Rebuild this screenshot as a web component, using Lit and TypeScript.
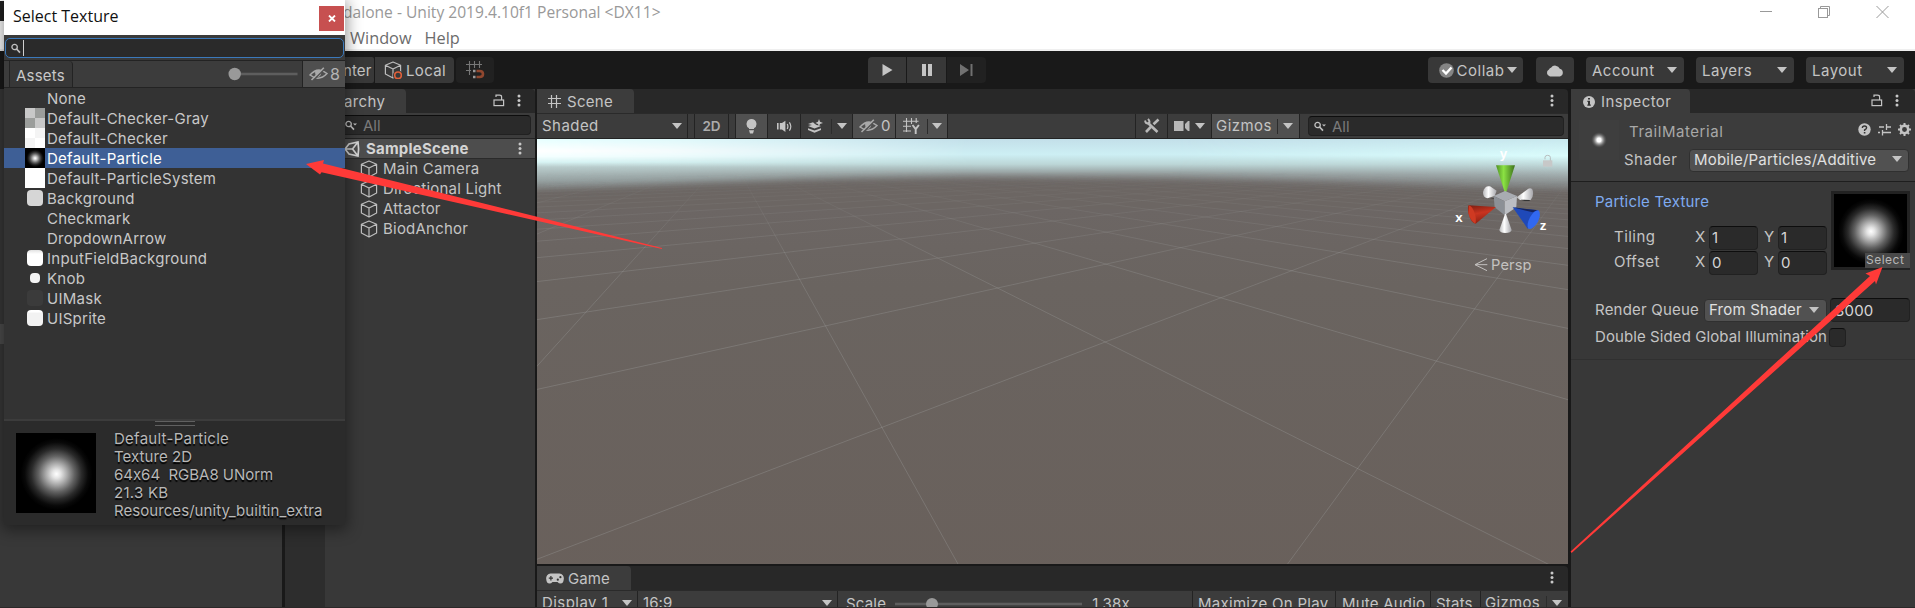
import { LitElement, html, svg, css } from "lit";
import { customElement } from "lit/decorators.js";

const caret = html`<svg class="caret" width="10" height="6" viewBox="0 0 10 6"><path d="M0 0H10L5 6Z" fill="currentColor"/></svg>`;
const dots = html`<svg class="dots" width="4" height="13" viewBox="0 0 4 13" fill="#c8c8c8"><circle cx="2" cy="2" r="1.5"/><circle cx="2" cy="6.5" r="1.5"/><circle cx="2" cy="11" r="1.5"/></svg>`;
const lock = html`<svg class="lock" width="12" height="13" viewBox="0 0 12 13" fill="none" stroke="#c4c4c4" stroke-width="1.2"><rect x="1" y="6" width="9.6" height="5.6"/><path d="M3 3V1.2H6.5Q8.6 1.2 8.6 3V6"/></svg>`;
const cube = (ring = false) => html`<svg class="cube" width="18" height="18" viewBox="0 0 18 18" fill="none" stroke="#bdbdbd" stroke-width="1.2" stroke-linejoin="round"><path d="M9 1L16.6 4.2V13L9 17L1.4 13V4.2ZM1.4 4.2L9 8L16.6 4.2M9 8V17"/>${ring ? svg`<circle cx="14" cy="14.5" r="5" fill="#383838" stroke="none"/><circle cx="14" cy="14.3" r="3.3" stroke="#e0603a" stroke-width="1.6"/>` : ""}</svg>`;
const search = (drop = true) => html`<svg class="mag" width="13" height="11" viewBox="0 0 13 11" fill="none" stroke="#c0c0c0"><circle cx="3.6" cy="4" r="2.7" stroke-width="1.3"/><path d="M5.6 6L9 9.6" stroke-width="1.6"/>${drop ? svg`<path d="M8 3.4h4L10 5.6Z" fill="#c0c0c0" stroke="none"/>` : ""}</svg>`;
const eye = html`<svg width="19" height="14" viewBox="0 0 19 14" fill="none" stroke="#a9a9a9"><path d="M1 8Q9 -1 18 6.5Q10 15 1 8Z" stroke-width="1.5"/><path d="M6 4.5Q9 2.5 12 4Q13 8 9.5 10Q6 9 6 4.5Z" fill="#a9a9a9" stroke="none"/><path d="M4 13.5L16 1.5" stroke="#505050" stroke-width="1.6"/><path d="M2.5 13L14.8 .7" stroke-width="1.6"/></svg>`;
const particle = (id: string, size: number) => html`<svg class="particle" width=${size} height=${size} viewBox="0 0 80 80"><defs><radialGradient id=${id}><stop offset="0" stop-color="#fff"/><stop offset=".12" stop-color="#e4e4e4"/><stop offset=".3" stop-color="#a8a8a8"/><stop offset=".5" stop-color="#626262"/><stop offset=".7" stop-color="#2a2a2a"/><stop offset=".88" stop-color="#090909"/><stop offset="1" stop-color="#000"/></radialGradient></defs><rect width="80" height="80" fill="#000"/><circle cx="40.5" cy="41" r="36" fill="url(#${id})"/></svg>`;

const shared = css`
  * { box-sizing: border-box; }
  svg { display: block; flex: none; }
  .caret { color: #c4c4c4; }
  .row { display: flex; align-items: center; }
  .grow { flex: 1; }
  .field {
    display: flex; align-items: center; background: #2a2a2a;
    border: 1px solid #212121; border-top-color: #0d0d0d; border-radius: 4px;
  }
  .tabs { display: flex; height: 24px; background: #282828; border-top-right-radius: 4px; flex: none; }
  .tab { display: flex; align-items: center; background: #3c3c3c; border-top-right-radius: 4px; padding-top: 1px; height: 24px; }
  .tools { display: flex; align-items: center; }
`;

/** Grid of the ground plane, projected to the viewport. */
function groundLines() {
  const project = (u: number, v: number) => {
    const w = 1 + 0.3177 * u + 0.4018 * v;
    return [(860 + 503.8 * u + 117.1 * v) / w / 1.5135, (618 + 21.6 * u + 21.2 * v) / w / 3 - 3];
  };
  const lines: number[][] = [];
  for (let k = -26; k <= 30; k++) {
    const v0 = (0.25 - 1 - 0.3177 * k) / 0.4018;
    lines.push([...project(k, v0), ...project(k, v0 + 70)]);
    const u0 = (0.25 - 1 - 0.4018 * k) / 0.3177;
    lines.push([...project(u0, k), ...project(u0 + 70, k)]);
  }
  return lines.map(([a, b, c, d]) => svg`<line x1=${a} y1=${b} x2=${c} y2=${d}/>`);
}

@customElement("scene-viewport")
class SceneViewport extends LitElement {
  static styles = css`
    :host { display: block; height: 425px; overflow: hidden; flex: none; }
    svg { display: block; }
    .axis { font: 700 40px "Liberation Sans", sans-serif; fill: #fff; }
    .persp { font: 44px Inter, sans-serif; fill: #c4c2c0; }
  `;
  render() {
    return html`<svg width="1031" height="425" viewBox="0 0 1031 425">
      <defs>
        <linearGradient id="sky" x2="0" y2="1"><stop offset="0" stop-color="#c3dfe9"/><stop offset=".22" stop-color="#cdeff4"/><stop offset=".36" stop-color="#bcd6d7"/><stop offset=".5" stop-color="#949c9c"/><stop offset=".62" stop-color="#7a7979"/><stop offset="1" stop-color="#6c6664"/></linearGradient>
        <linearGradient id="skyL" x2="0" y2="1"><stop offset="0" stop-color="#e6ffff"/><stop offset=".17" stop-color="#fff"/><stop offset=".25" stop-color="#f4ffff"/><stop offset=".33" stop-color="#d8f4f4"/><stop offset=".4" stop-color="#b9cccc"/><stop offset=".6" stop-color="#95a0a0"/><stop offset=".78" stop-color="#6d6866"/></linearGradient>
        <linearGradient id="skyR" x2="0" y2="1"><stop offset="0" stop-color="#c8e8ee"/><stop offset=".24" stop-color="#dafcfc"/><stop offset=".36" stop-color="#c0dadb"/><stop offset=".5" stop-color="#a3b0b1"/><stop offset=".65" stop-color="#858989"/><stop offset=".78" stop-color="#6d6866"/></linearGradient>
        <linearGradient id="fromL"><stop offset="0" stop-color="#fff"/><stop offset=".3" stop-color="#ccc"/><stop offset="1" stop-color="#000"/></linearGradient>
        <linearGradient id="fromR"><stop offset="0" stop-color="#000"/><stop offset="1" stop-color="#fff"/></linearGradient>
        <mask id="ml"><rect width="440" height="70" fill="url(#fromL)"/></mask>
        <mask id="mr"><rect x="640" width="391" height="70" fill="url(#fromR)"/></mask>
        <linearGradient id="fade" x2="0" y2="1"><stop offset=".08" stop-color="#000"/><stop offset=".15" stop-color="#555"/><stop offset=".3" stop-color="#ddd"/><stop offset=".5" stop-color="#fff"/></linearGradient>
        <linearGradient id="soil" x2="0" y2="1"><stop offset="0" stop-color="#6c6664"/><stop offset=".2" stop-color="#6a6460"/><stop offset="1" stop-color="#69605b"/></linearGradient>
        <mask id="far"><rect width="1031" height="425" fill="url(#fade)"/></mask>
        <filter id="soft" x="-10%" y="-10%" width="120%" height="120%"><feGaussianBlur stdDeviation="3.5"/></filter>
        <linearGradient id="cg"><stop offset="0" stop-color="#4f8f24"/><stop offset=".4" stop-color="#8be243"/><stop offset="1" stop-color="#3d701c"/></linearGradient>
        <linearGradient id="cr" x2=".3" y2="1"><stop offset="0" stop-color="#7a1d10"/><stop offset=".5" stop-color="#c93420"/><stop offset="1" stop-color="#8c2213"/></linearGradient>
        <linearGradient id="cw"><stop offset="0" stop-color="#b8b8ba"/><stop offset=".4" stop-color="#fff"/><stop offset="1" stop-color="#a5a5aa"/></linearGradient>
      </defs>
      <rect width="1031" height="70" fill="url(#sky)"/>
      <rect width="440" height="70" fill="url(#skyL)" mask="url(#ml)"/>
      <rect x="640" width="391" height="70" fill="url(#skyR)" mask="url(#mr)"/>
      <path d="M-40 56Q200 40 430 39Q750 39 1075 56V460H-40Z" fill="#6c6664" filter="url(#soft)"/>
      <path d="M-40 70H1075V460H-40Z" fill="url(#soil)"/>
      <g stroke="#b4b9b6" stroke-opacity=".24" stroke-width="1" mask="url(#far)">${groundLines()}</g>
      <g transform="translate(863 -19) scale(.33333)">
        <path d="M435 118v-6q0-6 8-6t8 6v12" fill="none" stroke="#b7bcbc" stroke-width="3"/><rect x="429" y="121" width="28" height="19" fill="#c7c8c8"/>
        <path d="M288 136H345L318 219H315Z" fill="url(#cg)"/>
        <path d="M249 216Q254 196 270 199L290 212L284 228L262 235Q248 232 249 216Z" fill="url(#cw)"/>
        <path d="M350 232L385 206Q397 202 399 215Q401 230 392 240L360 240Z" fill="url(#cw)"/>
        <path d="M362 239L390 240L388 243L374 243Z M270 234l14 1v3z" fill="#333"/>
        <path d="M315 213L351 228L314 244L281 228Z" fill="#a9acb2"/><path d="M281 228L314 244V286L284 262Z" fill="#8c9096"/><path d="M351 228L314 244V286L349 262Z" fill="#bcbec3"/>
        <path d="M315 282H318L335 330Q333 339 316 339Q300 339 298 330Z" fill="url(#cw)"/>
        <path d="M288 261L227 311Q213 310 205 280Q202 260 206 256Z" fill="url(#cr)"/><path d="M206 256Q217 257 226 285Q229 303 226 311Q213 305 206 280Z" fill="#cf3a22"/>
        <path d="M338 262L415 271L383 326Z" fill="#1f49b8"/><path d="M338 262L415 271L398 277Z" fill="#16245c"/>
        <path d="M415 271Q425 280 414 305Q400 328 386 327Q377 318 390 292Q403 270 415 271Z" fill="#3168f0"/>
        <text class="axis" x="299" y="114">y</text><text class="axis" x="166" y="305">x</text><text class="axis" x="419" y="330">z</text>
        <path d="M261 416L225 434L261 452M225 434H262" stroke="#c4c2c0" stroke-width="3" fill="none"/>
        <text class="persp" x="273" y="450" textLength="122">Persp</text>
      </g>
    </svg>`;
  }
}

@customElement("texture-picker")
class TexturePicker extends LitElement {
  static styles = [shared, css`
    :host { display: flex; flex-direction: column; width: 341px; height: 525px; background: #333; box-shadow: 0 3px 14px 2px rgba(0,0,0,.42); overflow: hidden; color: #c8c8c8; }
    .title { height: 35px; background: #fff; color: #111; font: 16px "Open Sans", "Noto Sans", sans-serif; padding: 0 1px 4px 9px; justify-content: space-between; letter-spacing: 0; flex: none; }
    .close { width: 25px; height: 25px; margin-top: 6px; background: #c75050; display: grid; place-items: center; }
    .find { height: 25px; background: #3a3a3a; padding: 3px 1px 2px; flex: none; }
    .input { height: 20px; border: 1.5px solid #3b79bb; border-radius: 5px; background: #2a2a2a; padding-left: 5px; display: flex; align-items: center; }
    .cursor { width: 1px; height: 16px; background: #d0d0d0; margin-left: -1px; }
    .bar { height: 28px; background: #3c3c3c; border-top: 1px solid #232323; border-bottom: 1px solid #232323; display: flex; align-items: stretch; flex: none; }
    .stub { width: 6px; border-right: 1px solid #232323; }
    .assets { width: 63px; background: #373737; border-right: 1px solid #232323; border-top-right-radius: 4px; padding: 2px 0 0 6px; display: flex; align-items: center; letter-spacing: .2px; }
    .count { width: 43px; background: #4f4f4f; border-left: 1px solid #232323; display: flex; align-items: center; gap: 2px; padding-left: 6px; font-size: 16px; color: #b4b4b4; }
    .slider { align-self: center; margin-right: 4px; }
    .list { flex: 1; letter-spacing: .26px; }
    .item { height: 20px; display: flex; align-items: center; padding-left: 21px; }
    .item.on { background: #3e5f96; color: #fff; }
    .thumb { width: 20px; height: 20px; margin-right: 2px; display: grid; place-items: center; flex: none; }
    .chip { width: 16px; height: 16px; border-radius: 4px; }
    .gray { background: conic-gradient(#9b9d9b 25%, #c8c8c8 0 50%, #9b9d9b 0 75%, #c8c8c8 0); }
    .checker { background: conic-gradient(#f4f4f4 25%, #fff 0 50%, #f4f4f4 0 75%, #fff 0); }
    .white { background: #fff; }
    .bg { background: #d6d6d6; } .input-bg { background: linear-gradient(#e2e2e2, #fff 25%); } .mask { background: #3b3b3b; } .sprite { background: linear-gradient(#fff 12%, #f2f2f2 20%); }
    .knob { width: 10px; height: 10px; border-radius: 4px; background: #f3f3f3; }
    .foot { height: 106px; background: #2b2b2b; border-top: 2px solid #3c3c3c; flex: none; }
    .grip { width: 40px; height: 5px; margin: 0 auto; border: solid #606060; border-width: 1px 0; }
    .info { display: flex; padding: 7px 0 0 12px; gap: 18px; }
    .meta { margin-top: -3px; line-height: 18px; text-shadow: 0 1.5px 1px #000; color: #b8b8b8; white-space: pre; letter-spacing: .26px; font-feature-settings: "calt" 0; }
    .tight { letter-spacing: -.02px; } .snug { letter-spacing: .06px; }
  `];
  items: [string, string][] = [
    ["None", ""], ["Default-Checker-Gray", "gray"], ["Default-Checker", "checker"], ["Default-Particle", "particle"],
    ["Default-ParticleSystem", "white"], ["Background", "chip bg"], ["Checkmark", ""], ["DropdownArrow", ""],
    ["InputFieldBackground", "chip input-bg"], ["Knob", "knob"], ["UIMask", "chip mask"], ["UISprite", "chip sprite"],
  ];
  render() {
    return html`
      <div class="row title"><span>Select Texture</span><div class="close"><svg width="8" height="7" viewBox="0 0 8 7"><path d="M1 .5L7 6.5M7 .5L1 6.5" stroke="#fff" stroke-width="1.8"/></svg></div></div>
      <div class="find"><div class="input">${search(false)}<span class="cursor"></span></div></div>
      <div class="bar"><span class="stub"></span><span class="assets">Assets</span><span class="grow"></span>
        <svg class="slider" width="70" height="14" viewBox="0 0 70 14"><rect x="6" y="5.7" width="63.5" height="2.6" fill="#5e5e5e"/><circle cx="6.7" cy="7" r="6.2" fill="#999"/></svg>
        <span class="count">${eye}<span>8</span></span></div>
      <div class="list">${this.items.map(([name, kind]) => html`<div class="item ${kind === "particle" ? "on" : ""}">
        ${kind === "particle" ? html`<span class="thumb">${particle("tiny", 20)}</span>`
          : ["gray", "checker", "white"].includes(kind) ? html`<span class="thumb ${kind}"></span>`
          : html`<span class="thumb"><i class=${kind}></i></span>`}<span>${name}</span></div>`)}</div>
      <div class="foot"><div class="grip"></div><div class="info">${particle("big", 80)}
        <div class="meta"><div>Default-Particle</div><div class="snug">Texture 2D</div><div class="tight">64x64  RGBA8 UNorm</div><div>21.3 KB</div><div class="snug">Resources/unity_builtin_extra</div></div></div></div>`;
  }
}

@customElement("inspector-panel")
class InspectorPanel extends LitElement {
  static styles = [shared, css`
    :host { display: flex; flex-direction: column; width: 344px; background: #383838; color: #c4c4c4; flex: none; letter-spacing: .2px; }
    .tab { width: 119px; padding-left: 12px; gap: 6px; letter-spacing: .4px; }
    .tabs .tools { margin-left: auto; gap: 12px; padding: 0 16px 2px 0; }
    .head { height: 69px; background: #3c3c3c; border-bottom: 1px solid #1e1e1e; display: flex; padding-left: 8px; flex: none; }
    .orb { margin-top: 7px; }
    .info { flex: 1; padding: 8px 4px 0 10px; }
    .name { height: 20px; color: #a8a8a8; letter-spacing: .55px; justify-content: space-between; }
    .name .tools { gap: 7px; margin-top: -4px; }
    .shader { margin-top: 8px; margin-left: -5px; height: 22px; justify-content: space-between; padding-right: 2px; }
    .shader > span { letter-spacing: .5px; padding-bottom: 1px; }
    .drop { background: #515151; border: 1px solid #303030; border-radius: 4px; height: 23px; display: flex; align-items: center; justify-content: space-between; padding: 0 6px 1px 4px; color: #e0e0e0; }
    .shader .drop { width: 220px; padding-bottom: 2px; }
    .body { padding: 9px 5px 0 24px; height: 178px; border-bottom: 1px solid #303030; }
    .tex { display: flex; justify-content: space-between; height: 80px; }
    .link { color: #7fabf0; height: 22px; display: flex; align-items: center; padding-bottom: 1px; }
    .uv { height: 25px; padding-left: 19px; }
    .uv.first { margin-top: 12px; }
    .lbl, .ax { padding-bottom: 2px; }
    .uv .lbl { width: 81px; letter-spacing: .45px; }
    .ax { width: 14px; } .ax.y { margin-left: 6px; }
    .uv .field { width: 49px; height: 24px; padding-left: 2px; color: #d6d6d6; }
    .slot { width: 79px; height: 79px; border: 3px solid #222; position: relative; flex: none; }
    .select { position: absolute; right: -3px; bottom: -1px; width: 45px; height: 15px; background: #494949; font-size: 12px; letter-spacing: .5px; line-height: 14px; padding-left: 1px; color: #b8b8b8; }
    .queue { margin-top: 27px; height: 24px; }
    .queue .lbl { width: 109px; }
    .queue .drop { width: 123px; padding-right: 7px; }
    .queue .field { width: 80px; height: 24px; margin-left: 3px; padding-left: 4px; color: #d6d6d6; }
    .gi { margin-top: 4px; height: 22px; letter-spacing: .09px; }
    .gi .lbl { width: 234px; white-space: nowrap; }
    .gi .field { width: 17px; height: 19px; }
  `];
  render() {
    return html`
      <div class="tabs"><div class="tab"><svg width="12" height="12" viewBox="0 0 12 12"><circle cx="6" cy="6" r="6" fill="#c4c4c4"/><path d="M5 2h2v1.6H5ZM4.4 4.8H7V8.6h.8V9.8H4.3V8.6H5V6H4.4Z" fill="#333"/></svg><span>Inspector</span></div><div class="tools">${lock}${dots}</div></div>
      <div class="head">
        <svg class="orb" width="40" height="40" viewBox="0 0 40 40"><defs><radialGradient id="o"><stop offset=".25" stop-color="#fff"/><stop offset=".6" stop-color="#aaa" stop-opacity=".6"/><stop offset="1" stop-color="#555" stop-opacity="0"/></radialGradient></defs><rect width="40" height="40" fill="#3e3e3e"/><circle cx="20" cy="20" r="8" fill="url(#o)"/></svg>
        <div class="info">
          <div class="row name"><span>TrailMaterial</span><div class="tools">
            <svg width="13" height="13" viewBox="0 0 13 13"><circle cx="6.5" cy="6.5" r="6.2" fill="#c4c4c4"/><path d="M4.4 5Q4.4 3 6.5 3T8.6 4.8Q8.6 6 6.6 6.9V8" stroke="#333" stroke-width="1.4" fill="none"/><rect x="5.8" y="9" width="1.6" height="1.5" fill="#333"/></svg>
            <svg width="13" height="13" viewBox="0 0 13 13" stroke="#c4c4c4" stroke-width="1.3" fill="none"><path d="M1 4h5M8.5 4H13M8.5 1v6M0 9.5h2M4.5 9.5H13M4.5 7v5.5"/></svg>
            <svg width="13" height="13" viewBox="0 0 13 13"><circle cx="6.5" cy="6.5" r="3.7" fill="none" stroke="#c4c4c4" stroke-width="2.5"/><path d="M6.5 0V3M6.5 10V13M0 6.5H2.5M10.5 6.5H13M2 2L3.6 3.6M9.4 9.4L11 11M11 2L9.4 3.6M3.6 9.4L2 11" stroke="#c4c4c4" stroke-width="2"/></svg></div></div>
          <div class="row shader"><span>Shader</span><div class="drop"><span>Mobile/Particles/Additive</span>${caret}</div></div>
        </div>
      </div>
      <div class="body">
        <div class="tex"><div>
          <div class="link">Particle Texture</div>
          <div class="row uv first"><span class="lbl">Tiling</span><span class="ax">X</span><span class="field">1</span><span class="ax y">Y</span><span class="field">1</span></div>
          <div class="row uv"><span class="lbl">Offset</span><span class="ax">X</span><span class="field">0</span><span class="ax y">Y</span><span class="field">0</span></div>
        </div><div class="slot">${particle("slot", 73)}<span class="select">Select</span></div></div>
        <div class="row queue"><span class="lbl">Render Queue</span><div class="drop"><span>From Shader</span>${caret}</div><span class="field">3000</span></div>
        <div class="row gi"><span class="lbl">Double Sided Global Illumination</span><span class="field"></span></div>
      </div>`;
  }
}

@customElement("hierarchy-panel")
class HierarchyPanel extends LitElement {
  static styles = [shared, css`
    :host { display: flex; flex-direction: column; width: 250px; background: #383838; border-left: 40px solid #2d2d2d; color: #c4c4c4; flex: none; }
    .tab { width: 81px; padding-left: 19px; letter-spacing: .35px; }
    .tabs .tools { margin-left: auto; gap: 12px; padding: 0 14px 2px 0; }
    .find { height: 26px; background: #3c3c3c; border-bottom: 1px solid #232323; padding: 2px 4px 0 0; flex: none; }
    .find .field { height: 20px; padding-left: 19px; color: #7a7a7a; gap: 5px; letter-spacing: 0; }
    .scene { height: 20px; background: #4d4d4d; border-bottom: 1px solid #2a2a2a; font-weight: 700; padding: 0 13px 0 19px; gap: 6px; letter-spacing: .2px; color: #d4d4d4; }
    .node { height: 20px; padding: 0 0 1px 35px; gap: 5px; letter-spacing: .22px; }
  `];
  render() {
    return html`
      <div class="tabs"><div class="tab">archy</div><div class="tools">${lock}${dots}</div></div>
      <div class="find"><div class="field">${search()}<span>All</span></div></div>
      <div class="row scene"><svg width="16" height="16" viewBox="0 0 16 16" fill="none" stroke="#d4d4d4" stroke-width="1.7"><path d="M1 8L5 3L14 1L14.6 8L14 15L5 13ZM1 8H8.5L14 1M8.5 8L14 15"/></svg><span>SampleScene</span><span class="grow"></span>${dots}</div>
      ${["Main Camera", "Directional Light", "Attactor", "BiodAnchor"].map((n) => html`<div class="row node">${cube()}<span>${n}</span></div>`)}`;
  }
}

@customElement("scene-panel")
class ScenePanel extends LitElement {
  static styles = [shared, css`
    :host { display: flex; flex-direction: column; width: 1031px; color: #c4c4c4; flex: none; overflow: hidden; letter-spacing: .45px; }
    .tab { width: 97px; padding-left: 11px; gap: 6px; letter-spacing: .3px; }
    .tab.game { width: 94px; padding-left: 9px; gap: 4px; letter-spacing: .1px; }
    .tabs { padding-right: 14px; }
    .tabs .dots { margin: 5px 0 0 auto; }
    .strip { height: 26px; background: #3c3c3c; border-bottom: 1px solid #232323; border-top: 1px solid #2a2a2a; display: flex; flex: none; }
    .cell { display: flex; align-items: center; border-right: 1px solid #232323; flex: none; }
    .cell > span { padding-bottom: 1px; }
    .center { justify-content: center; }
    .lit { background: #505050; }
    .shaded { width: 151px; padding: 0 5px; justify-content: space-between; }
    .gap { width: 7px; }
    .two { width: 34px; font-size: 13.5px; font-weight: 600; letter-spacing: -.2px; color: #acacac; padding-bottom: 1px; }
    .b32 { width: 32px; } .b33 { width: 33px; }
    .split { width: 52px; padding: 0 5px 0 7px; justify-content: space-between; }
    .split .bar { width: 1px; height: 15px; background: #2c2c2c; margin-left: 2px; }
    .eyes { width: 43px; padding-left: 6px; gap: 3px; font-size: 15px; letter-spacing: 0; }
    .fill { width: 188px; }
    .cam { width: 43px; padding: 0 6px 0 5px; justify-content: space-between; margin-left: 1px; }
    .giz { width: 88px; padding: 0 6px 0 4px; justify-content: space-between; }
    .giz .bar { width: 1px; height: 15px; background: #2c2c2c; margin-left: 1px; }
    .strip .field { width: 256px; height: 20px; margin: 2px 0 0 8px; padding-left: 5px; gap: 5px; color: #7a7a7a; letter-spacing: 0; }
    .rule { height: 2px; background: #191919; flex: none; }
    .display { width: 101px; padding: 0 5px; justify-content: space-between; }
    .ratio { width: 200px; padding: 0 5px; justify-content: space-between; letter-spacing: .1px; }
    .scale { width: 355px; padding: 2px 0 0 8px; gap: 9px; letter-spacing: .2px; }
    .max { width: 143px; padding-left: 5px; letter-spacing: .28px; } .mute { width: 95px; padding-left: 6px; letter-spacing: .2px; } .stats { width: 50px; padding-left: 5px; letter-spacing: .2px; }
    .end { width: 88px; padding: 0 6px 0 4px; justify-content: space-between; letter-spacing: .3px; }
    .end .bar { width: 1px; height: 15px; background: #2c2c2c; margin-left: 2px; }
  `];
  render() {
    return html`
      <div class="tabs"><div class="tab"><svg width="13" height="13" viewBox="0 0 13 13" stroke="#c4c4c4" stroke-width="1.2"><path d="M3.5 0V13M8.5 0V13M0 3.5H13M0 8.5H13"/></svg><span>Scene</span></div>${dots}</div>
      <div class="strip">
        <div class="cell shaded"><span>Shaded</span>${caret}</div><div class="cell gap"></div>
        <div class="cell two center">2D</div><div class="cell gap"></div>
        <div class="cell lit b32 center"><svg width="11" height="15" viewBox="0 0 11 15" fill="#c4c4c4"><path d="M5.5 0A5 5 0 0 1 8 9.3V10H3V9.3A5 5 0 0 1 5.5 0ZM3 11.3H8L7 14.5H4Z"/></svg></div>
        <div class="cell b33 center"><svg width="15" height="13" viewBox="0 0 15 13"><path d="M0 3h1.6v6.5H0ZM2.8 3H5L8.4 .8V12L5 9.6H2.8Z" fill="#c4c4c4"/><path d="M10.2 4Q11.6 6.4 10.2 9M12.4 2.3Q15.2 6.4 12.4 10.6" stroke="#c4c4c4" stroke-width="1.2" fill="none"/></svg></div>
        <div class="cell split"><svg width="15" height="14" viewBox="0 0 15 14" fill="#c4c4c4"><path d="M0 5L5 3.2L7 5L8.5 6L13 7L6.5 9.6L0 7L4 6ZM0 9.2L6.5 11.6L13 9.2V11L6.5 13.8L0 11ZM11 0L12 2.8L15 4L12 5L11 7.5L10 5L7.4 4L10 2.8Z"/></svg><i class="bar"></i>${caret}</div>
        <div class="cell lit eyes">${eye}<span>0</span></div>
        <div class="cell lit split"><svg width="17" height="16" viewBox="0 0 17 16" fill="none" stroke="#c4c4c4"><path d="M3.5 0V14M8.5 0V6M13.2 0V5M0 3.2H15.5M0 8.2H8M0 13H8" stroke-width="1.1"/><path d="M9.5 7L12.7 11.2L15.9 7M12.7 11V16" stroke-width="1.9"/></svg><i class="bar"></i>${caret}</div>
        <div class="cell fill"></div>
        <div class="cell b32 center"><svg width="16" height="16" viewBox="0 0 16 16" stroke="#b8b8b8" fill="none"><path d="M3.5 4.5L13.5 14" stroke-width="2.6"/><path d="M1 2.5Q1.5 6 5 5.5Q6.5 3.5 4 .8" stroke-width="1.8"/><path d="M14.5 1.5L9.5 6.2M6.8 9L2 14" stroke-width="2.6"/></svg></div>
        <div class="cell cam"><svg width="16" height="12" viewBox="0 0 16 12" fill="#b8b8b8"><path d="M0 1h9.5v10H0ZM11 4L14 1H15.5V11H14L11 8Z"/></svg>${caret}</div>
        <div class="cell lit giz"><span>Gizmos</span><i class="bar"></i>${caret}</div>
        <div class="field">${search()}<span>All</span></div>
      </div>
      <scene-viewport></scene-viewport>
      <div class="rule"></div>
      <div class="tabs"><div class="tab game"><svg width="18" height="11" viewBox="0 0 18 11"><path d="M4.5 .5H13.5A4.8 4.8 0 0 1 17.8 6Q17.5 10.5 14.5 10.5Q12.8 10.5 11.5 9H6.5Q5.2 10.5 3.5 10.5Q.5 10.5 .2 6A4.8 4.8 0 0 1 4.5 .5Z" fill="#c4c4c4"/><path d="M2.8 5.2H7M4.9 3V7.4" stroke="#333" stroke-width="1.2"/><circle cx="11.8" cy="6.7" r="1.1" fill="#333"/><circle cx="14.4" cy="4.2" r="1.1" fill="#333"/></svg><span>Game</span></div>${dots}</div>
      <div class="strip">
        <div class="cell display"><span>Display 1</span>${caret}</div>
        <div class="cell ratio"><span>16:9</span>${caret}</div>
        <div class="cell scale"><span>Scale</span><svg width="188" height="12" viewBox="0 0 188 12"><rect y="4.7" width="187" height="2.6" fill="#5e5e5e"/><circle cx="37" cy="6" r="6" fill="#999"/></svg><span>1.38x</span></div>
        <div class="cell max">Maximize On Play</div><div class="cell mute">Mute Audio</div><div class="cell stats">Stats</div>
        <div class="cell end"><span>Gizmos</span><i class="bar"></i>${caret}</div>
      </div>`;
  }
}

@customElement("app-root")
class AppRoot extends LitElement {
  static styles = [shared, css`
    :host { display: flex; flex-direction: column; position: relative; width: 1915px; height: 608px; overflow: hidden; background: #191919; font: 15px Inter, sans-serif; letter-spacing: .5px; white-space: nowrap; color: #c4c4c4; }
    .chrome { height: 51px; background: #fff; border-bottom: 2px solid #efefef; font: 16.3px "Open Sans", "Noto Sans", sans-serif; letter-spacing: 0; flex: none; color: #999; }
    .caption { height: 23px; padding-left: 343px; justify-content: space-between; padding-right: 26px; font-size: 15.6px; }
    .winbtns { gap: 46px; }
    .menu { height: 28px; padding: 1px 0 0 350px; gap: 13px; color: #6b6b6b; }
    .toolbar { height: 38px; padding-top: 6px; display: flex; flex: none; }
    .btn { height: 26px; background: #383838; display: flex; align-items: center; flex: none; }
    .btn.off { background: #212121; }
    .pivot { width: 34px; margin-left: 340px; padding-left: 3px; margin-right: 1px; border-radius: 0 2px 2px 0; letter-spacing: .1px; }
    .local { width: 79px; padding-left: 9px; gap: 4px; border-radius: 0 4px 4px 0; margin-right: 2px; letter-spacing: .35px; }
    .snap { width: 38px; justify-content: center; border-radius: 4px; }
    .play { width: 38px; margin-left: 374px; margin-right: 1px; border-radius: 4px 0 0 0; justify-content: center; }
    .pause { width: 39px; margin-right: 1px; justify-content: center; }
    .step { width: 39px; justify-content: center; border-radius: 0 4px 4px 0; }
    .collab { width: 95px; margin-left: 442px; margin-right: 13px; border-radius: 4px; padding: 0 6px 0 11px; justify-content: space-between; }
    .cloud { width: 38px; justify-content: center; border-radius: 4px; }
    .menu-btn { width: 98px; margin-left: 12px; border-radius: 4px; padding: 0 7px 0 6px; justify-content: space-between; }
    .work { display: flex; height: 519px; }
    .left { width: 282px; margin-right: 3px; background: #383838; padding-top: 235px; }
    .peek { height: 20px; background: #4d4d4d; }
    .mid { margin: 0 3px 0 2px; }
    .popup { position: absolute; left: 4px; top: 0; }
    .arrows { position: absolute; left: 0; top: 0; pointer-events: none; }
    .corner { position: absolute; left: 0; top: 1px; width: 4px; height: 20px; background: #222; }
    .edge { position: absolute; left: 0; bottom: 0; width: 100%; height: 1px; background: #2b2828; }
  `];
  render() {
    return html`
      <div class="chrome">
        <div class="row caption"><span>dalone - Unity 2019.4.10f1 Personal &lt;DX11&gt;</span>
          <div class="row winbtns"><svg width="12" height="12" viewBox="0 0 12 12"><path d="M0 5.5H12" stroke="#999"/></svg><svg width="12" height="12" viewBox="0 0 12 12" fill="none" stroke="#999"><rect x=".5" y="2.5" width="9" height="9"/><path d="M2.5 2.5V.5H11.5V9.5H9.5"/></svg><svg width="13" height="12" viewBox="0 0 13 12"><path d="M.5 0L12.5 12M12.5 0L.5 12" stroke="#999"/></svg></div></div>
        <div class="row menu"><span>Window</span><span>Help</span></div>
      </div>
      <div class="toolbar">
        <div class="btn pivot">nter</div>
        <div class="btn local">${cube(true)}<span>Local</span></div>
        <div class="btn off snap"><svg width="19" height="18" viewBox="0 0 19 18" fill="none" stroke="#777" stroke-width="1.1"><path d="M3.5 0V14M8.5 0V7M13.5 0V7M0 3.5H16M0 9.5H5"/><path d="M10.5 10H13.5Q17 10 17 13T13.5 16H10.5" stroke="#90472f" stroke-width="2.6"/><path d="M7 10H9.5M7 16H9.5" stroke="#999" stroke-width="2.4"/></svg></div>
        <div class="btn play"><svg width="11" height="12" viewBox="0 0 11 12"><path d="M.5 0L10.5 6L.5 12Z" fill="#c4c4c4"/></svg></div>
        <div class="btn pause"><svg width="10" height="12" viewBox="0 0 10 12" fill="#c4c4c4"><rect width="4" height="12"/><rect x="6" width="4" height="12"/></svg></div>
        <div class="btn off step"><svg width="13" height="12" viewBox="0 0 13 12" fill="#717171"><path d="M0 0L9 6L0 12ZM10.5 0h2V12h-2Z"/></svg></div>
        <div class="btn collab"><svg width="15" height="15" viewBox="0 0 15 15"><circle cx="7.5" cy="7.5" r="7.3" fill="#858585"/><path d="M3.5 7L7 10.5L12.5 4.5" stroke="#fff" stroke-width="2.4" fill="none"/></svg><span>Collab</span>${caret}</div>
        <div class="btn cloud"><svg width="18" height="13" viewBox="0 0 18 13" fill="#c4c4c4"><path d="M4 12.5A3.8 3.8 0 0 1 3 5.4A3.5 3.5 0 0 1 5 3.8A5 5 0 0 1 13.8 4.8A4 4 0 0 1 14 12.5Z"/></svg></div>
        ${["Account", "Layers", "Layout"].map((n) => html`<div class="btn menu-btn"><span>${n}</span>${caret}</div>`)}
      </div>
      <div class="work">
        <div class="left"><div class="peek"></div></div>
        <hierarchy-panel></hierarchy-panel>
        <scene-panel class="mid"></scene-panel>
        <inspector-panel></inspector-panel>
      </div>
      <div class="corner"></div>
      <div class="edge"></div>
      <texture-picker class="popup"></texture-picker>
      <svg class="arrows" width="1915" height="608" viewBox="0 0 1915 608" fill="#ff3a38"><path d="M306 164L324 160L323 163.5L662 248L661.8 249L321.5 172.3L320 174.5Z"/><path d="M1882.5 267L1865.5 273.5L1870 276L1570.6 551.6L1571.6 553L1875 281L1876 284.5Z"/></svg>`;
  }
}
